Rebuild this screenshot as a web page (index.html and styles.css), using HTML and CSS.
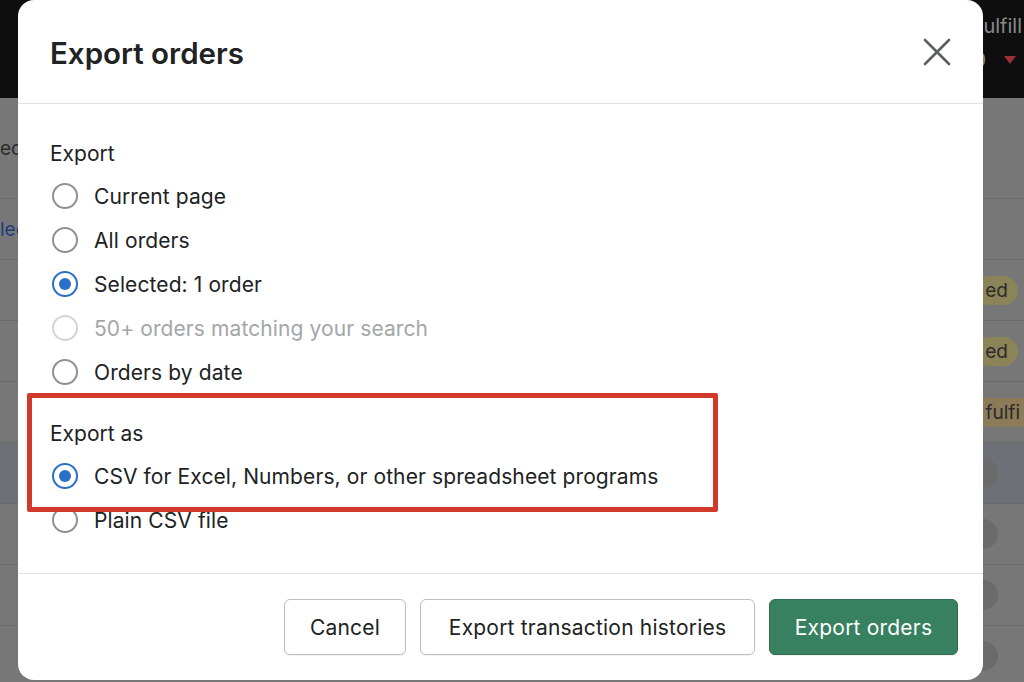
FILE: index.html
```html
<!DOCTYPE html>
<html lang="en">
<head>
  <meta charset="UTF-8">
  <meta name="viewport" content="width=device-width, initial-scale=1.0">
  <title>Export orders</title>
  <link rel="stylesheet" href="styles.css">
</head>
<body>
  <div class="page">
    <div class="topbar">
      <span class="topbar-text">fulfill</span>
      <span class="topbar-count">0 <span class="caret"></span></span>
    </div>
    <div class="rows">
      <div class="row"><span class="row-left">ec</span></div>
      <div class="row"><span class="row-left link">lec</span></div>
      <div class="row"><span class="badge yellow">ed</span></div>
      <div class="row"><span class="badge yellow">ed</span></div>
      <div class="row"><span class="badge orange">y fulfi</span></div>
      <div class="row selected"><span class="dot"></span></div>
      <div class="row"><span class="dot"></span></div>
      <div class="row"><span class="dot"></span></div>
      <div class="row"><span class="dot"></span></div>
    </div>
  </div>

  <div class="modal">
    <div class="modal-header">
      <h1>Export orders</h1>
      <button class="close" aria-label="Close">
        <svg width="28" height="28" viewBox="0 0 28 28">
          <path d="M2 2 L26 26 M26 2 L2 26" stroke="#5c5f62" stroke-width="2.6" stroke-linecap="round"/>
        </svg>
      </button>
    </div>

    <div class="modal-body">
      <div class="group">
        <div class="group-label">Export</div>
        <label class="option"><span class="radio"></span>Current page</label>
        <label class="option"><span class="radio"></span>All orders</label>
        <label class="option"><span class="radio checked"></span>Selected: 1 order</label>
        <label class="option disabled"><span class="radio"></span>50+ orders matching your search</label>
        <label class="option"><span class="radio"></span>Orders by date</label>
      </div>
      <div class="group group-as">
        <div class="group-label">Export as</div>
        <label class="option"><span class="radio checked"></span>CSV for Excel, Numbers, or other spreadsheet programs</label>
        <label class="option"><span class="radio"></span>Plain CSV file</label>
      </div>
      <div class="highlight"></div>
    </div>

    <div class="modal-footer">
      <button class="btn btn-cancel">Cancel</button>
      <button class="btn btn-history">Export transaction histories</button>
      <button class="btn btn-primary">Export orders</button>
    </div>
  </div>
</body>
</html>
```

FILE: styles.css
```css
body {
  margin: 0;
  padding: 0;
  font-family: Inter, "Noto Sans", sans-serif;
  background-color: #777777;
  height: 682px;
  overflow: hidden;
}

/* fond de page, grisé par le voile */
.page {
  width: 100%;
}

.topbar {
  height: 98px;
  background-color: #0e0e0f;
  position: relative;
  color: #8a8a8a;
  font-size: 20px;
}

.topbar-text {
  position: absolute;
  right: 2px;
  top: 14px;
}

.topbar-count {
  position: absolute;
  right: 8px;
  top: 48px;
  display: flex;
  align-items: center;
  gap: 18px;
}

.caret {
  width: 0;
  height: 0;
  border-left: 6px solid transparent;
  border-right: 6px solid transparent;
  border-top: 8px solid #9b2f35;
}

.rows {
  display: flex;
  flex-direction: column;
}

.row {
  height: 60px;
  border-bottom: 1px solid #6a6a6a;
  display: flex;
  align-items: center;
  justify-content: space-between;
  font-size: 19px;
  color: #2b2b2b;
  position: relative;
}

.row:first-child {
  height: 100px;
}

.row.selected {
  background-color: #6e7077;
}

.row-left {
  margin-left: 0;
}

.row-left.link {
  color: #1f3d7a;
}

.badge {
  margin-left: auto;
  margin-right: 6px;
  padding: 3px 10px;
  border-radius: 16px;
  color: #2b2b2b;
}

.badge.yellow {
  background-color: #8a8458;
}

.badge.orange {
  background-color: #8c7a58;
  margin-right: -6px;
  border-radius: 0;
}

.dot {
  margin-left: auto;
  margin-right: 26px;
  width: 30px;
  height: 30px;
  border-radius: 50%;
  background-color: #6b6b6b;
}

/* la fenêtre modale */
.modal {
  position: absolute;
  left: 18px;
  top: 0;
  width: 965px;
  height: 680px;
  background-color: #ffffff;
  border-radius: 16px;
  display: flex;
  flex-direction: column;
  color: #202223;
}

.modal-header {
  height: 104px;
  border-bottom: 1px solid #e1e3e5;
  display: flex;
  align-items: center;
  justify-content: space-between;
  padding: 0 32px;
  box-sizing: border-box;
  flex-shrink: 0;
}

.modal-header h1 {
  margin: 0;
  font-size: 29.5px;
  font-weight: 600;
  letter-spacing: 0;
  padding-top: 2px;
}

.close {
  background: none;
  border: none;
  padding: 0;
  margin-right: 0;
  display: flex;
  cursor: pointer;
}

.modal-body {
  flex: 1;
  padding: 36px 32px 0;
  position: relative;
}

.group-label {
  font-size: 21px;
  line-height: 28px;
  margin-bottom: 6px;
}

.option {
  display: flex;
  align-items: center;
  gap: 16px;
  height: 44px;
  font-size: 21px;
  letter-spacing: 0.1px;
  margin-left: 2px;
}

.option.disabled {
  color: #a3a6a9;
}

.radio {
  width: 22px;
  height: 22px;
  border: 2px solid #8c9196;
  border-radius: 50%;
  position: relative;
  flex-shrink: 0;
}

.option.disabled .radio {
  border-color: #d2d5d8;
}

.radio.checked {
  border-color: #2c6ecb;
}

.radio.checked::after {
  content: "";
  position: absolute;
  left: 5px;
  top: 5px;
  width: 12px;
  height: 12px;
  border-radius: 50%;
  background-color: #2c6ecb;
}

.group-as {
  margin-top: 26px;
}

.highlight {
  position: absolute;
  left: 9px;
  top: 289px;
  width: 681px;
  height: 109px;
  border: 5px solid #d13a2b;
  border-radius: 2px;
}

.modal-footer {
  height: 107px;
  border-top: 1px solid #e1e3e5;
  display: flex;
  justify-content: flex-end;
  align-items: center;
  gap: 14px;
  padding: 0 25px 0 0;
  box-sizing: border-box;
  flex-shrink: 0;
}

.btn {
  height: 56px;
  font-family: Inter, "Noto Sans", sans-serif;
  font-size: 21px;
  font-weight: 400;
  letter-spacing: 0.2px;
  border-radius: 6px;
  border: 1px solid #babfc3;
  background-color: #ffffff;
  color: #202223;
  cursor: pointer;
  box-shadow: 0 1px 0 rgba(0, 0, 0, 0.05);
}

.btn-cancel {
  width: 122px;
}

.btn-history {
  width: 335px;
}

.btn-primary {
  width: 189px;
  background-color: #378060;
  border-color: #2e6d52;
  color: #ffffff;
}
```
